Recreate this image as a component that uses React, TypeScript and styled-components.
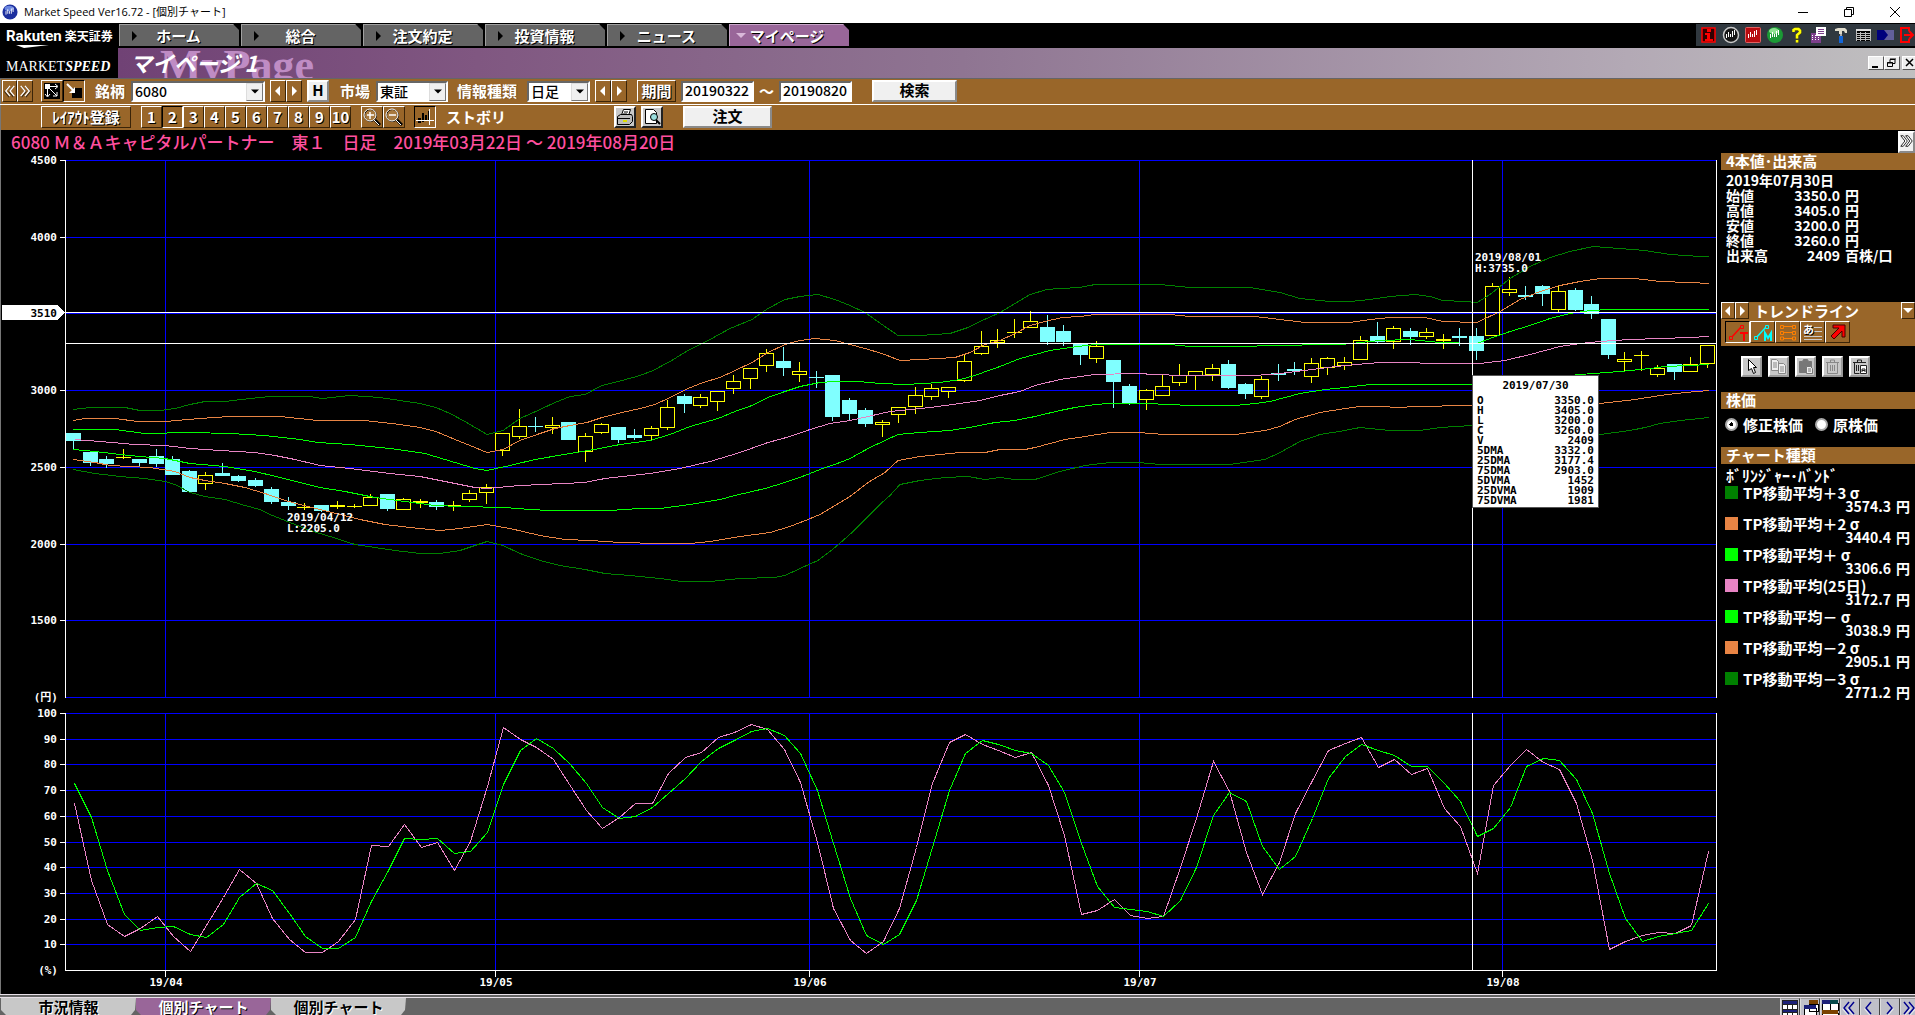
import React from "react";
import styled, { createGlobalStyle, css } from "styled-components";

const jp = '"Noto Sans CJK JP", sans-serif';
const mono = '"DejaVu Sans Mono", "Noto Sans CJK JP", monospace';
const brown = "#996629";
const blue = "#0000ff";
const lime = "#00ff00";
const dark = "#008000";
const orange = "#e88444";
const pink = "#e884c4";

const Global = createGlobalStyle`
  * { box-sizing: border-box; }
  html, body { margin: 0; background: #000; overflow: hidden; }
  body { font-family: ${jp}; color: #fff; }
  button, input, select { font-family: inherit; margin: 0; padding: 0; border-radius: 0; }
`;

const Page = styled.div`
  display: flex;
  flex-direction: column;
  height: 100vh;
  overflow: hidden;
  white-space: nowrap;
`;

/* ---------- window title ---------- */
const TitleBar = styled.header`
  display: flex;
  flex: none;
  align-items: center;
  height: 23px;
  padding-left: 2px;
  gap: 6px;
  background: #fff;
  color: #000;
  font: 11px/22px "Open Sans", ${jp};
`;
const TitleText = styled.span`
  flex: 1;
`;
const WindowButtons = styled.div`
  display: flex;
  margin-right: -3px;
`;
const WindowButton = styled.button`
  width: 46px;
  height: 22px;
  border: 0;
  background: none;
  display: flex;
  align-items: center;
  justify-content: center;
`;

/* ---------- brand and navigation ---------- */
const Head = styled.div`
  display: flex;
  flex: none;
  height: 56px;
  background: #000;
  border-bottom: 1px solid #666;
`;
const Brand = styled.div`
  width: 118px;
  flex: none;
  padding: 1px 0 0 6px;
`;
const Rakuten = styled.div`
  display: flex;
  align-items: center;
  gap: 3px;
  height: 24px;
  font: bold 12px/24px ${jp};
  b {
    font: bold 15px/24px Roboto, sans-serif;
    border: 0;
  }
`;
const Swoosh = styled.svg`
  display: block;
  margin: -3px 0 0 10px;
`;
const MarketSpeed = styled.div`
  font: 14px/20px "Liberation Serif", serif;
  margin-top: 8px;
`;
const HeadMain = styled.div`
  flex: 1;
  min-width: 0;
  display: flex;
  flex-direction: column;
`;
const NavRow = styled.nav`
  display: flex;
  height: 25px;
  padding: 1px 0 2px 1px;
  gap: 2px;
`;
const NavTab = styled.button<{ $on?: boolean }>`
  display: grid;
  grid-template-columns: 12px 1fr 23px;
  align-items: center;
  width: 120px;
  height: 22px;
  border: 0;
  border-top: 1px solid ${(p) => (p.$on ? "#c9a6c9" : "#a0a0a0")};
  border-left: 1px solid ${(p) => (p.$on ? "#c9a6c9" : "#a0a0a0")};
  padding-left: ${(p) => (p.$on ? "6px" : "9px")};
  background: ${(p) => (p.$on ? "#996699" : "#646464")};
  color: #fff;
  font: bold 15px/20px ${jp};
  text-shadow: 1px 1px 0 #000;
  clip-path: polygon(0 0, 114px 0, 100% 6px, 100% 100%, 0 100%);
`;
const IconStrip = styled.div`
  display: flex;
  align-items: center;
  gap: 4px;
  margin-left: auto;
  width: 219px;
  height: 22px;
  padding-left: 4px;
  background: #30383f;
`;
const StripButton = styled.button`
  flex: none;
  width: 18px;
  height: 18px;
  border: 0;
  background: none;
  svg { display: block; }
`;
const Banner = styled.div`
  position: relative;
  display: flex;
  align-items: center;
  height: 30px;
  overflow: hidden;
  background: linear-gradient(90deg, #704275 0, #805781 20%, #8f7592 47%, #b3a9b5 84%, #c0c0c0 100%);
`;
const Ghost = styled.span`
  position: absolute;
  left: 42px;
  top: -4px;
  font: bold 44px/44px "Liberation Serif", serif;
  color: #bf8cc4;
`;
const PageName = styled.h1`
  position: relative;
  margin: 0 auto 0 12px;
  padding-bottom: 3px;
  font: italic bold 22px/26px ${jp};
`;
const MdiButtons = styled.div`
  display: flex;
  margin-right: -3px;
`;
const MdiButton = styled.button<{ $gap?: boolean }>`
  display: flex;
  align-items: center;
  justify-content: center;
  width: 16px;
  height: 14px;
  margin-left: ${(p) => (p.$gap ? "2px" : "0")};
  border: 1px solid;
  border-color: #fff #555 #555 #fff;
  background: #eee;
`;

/* ---------- tool bars ---------- */
const Bar = styled.div`
  display: flex;
  flex: none;
  align-items: center;
  height: 25px;
  background: ${brown};
  border-left: 1px solid #777;
  padding-bottom: 1px;
  font: bold 15px/20px ${jp};
`;
const Rule = styled.div`
  flex: none;
  height: 1px;
  background: #fff;
`;
const Gap = styled.span<{ $w: number }>`
  flex: none;
  width: ${(p) => p.$w}px;
`;
const Caption = styled.label`
  flex: none;
  text-shadow: 1px 0 0 rgba(0, 0, 0, 0.3);
`;
const ToolButton = styled.button<{ $w: number; $down?: boolean }>`
  flex: none;
  display: flex;
  align-items: center;
  justify-content: center;
  width: ${(p) => p.$w}px;
  height: 22px;
  border: 1px solid;
  border-color: ${(p) => (p.$down ? "#000 #fff #fff #000" : "#fff #3a2408 #3a2408 #fff")};
  background: ${brown};
  color: #fff;
  font: bold 15px/18px ${jp};
  text-shadow: 1px 1px 0 #000;
`;
const PlainButton = styled.button<{ $w: number }>`
  flex: none;
  display: flex;
  align-items: center;
  justify-content: center;
  width: ${(p) => p.$w}px;
  height: 22px;
  border: 2px solid;
  border-color: #fff #8a8a8a #8a8a8a #fff;
  padding-bottom: 2px;
  background: #f0f0f0;
  color: #000;
  font: bold 15px/16px ${jp};
`;
const field = css`
  border: 2px solid;
  border-color: #666 #fff #fff #666;
  background: #fff;
  color: #000;
  font: 500 14px/16px ${jp};
`;
const Field = styled.input`
  ${field}
  flex: none;
  width: 73px;
  height: 21px;
  padding: 0 0 2px 2px;
`;
const Combo = styled.span<{ $w: number }>`
  ${field}
  flex: none;
  display: grid;
  width: ${(p) => p.$w}px;
  height: 21px;
  select {
    grid-area: 1 / 1;
    appearance: none;
    border: 0;
    padding: 0 0 2px 2px;
    background: #fff;
    color: #000;
    font: inherit;
  }
`;
const ComboArrow = styled.span`
  grid-area: 1 / 1;
  justify-self: end;
  display: flex;
  align-items: center;
  justify-content: center;
  width: 17px;
  pointer-events: none;
  border: 1px solid;
  border-color: #ddd #777 #777 #ddd;
  background: #f0f0f0;
`;

/* ---------- body ---------- */
const Main = styled.main`
  display: flex;
  flex: 1;
  min-height: 0;
`;
const ChartColumn = styled.section`
  flex: 1;
  min-width: 0;
  display: flex;
  flex-direction: column;
  border-left: 1px solid #777;
`;
const ChartTitle = styled.h2`
  flex: none;
  height: 25px;
  margin: 0;
  padding-left: 10px;
  color: #ff4f9f;
  font: 500 17px/23px ${jp};
`;
const ChartArea = styled.div`
  position: relative;
  flex: 1;
  min-height: 0;
`;
const ChartSvg = styled.svg`
  display: block;
  width: 100%;
  height: 100%;
  font: bold 11px ${mono};
`;
const Tooltip = styled.table`
  position: absolute;
  left: 1471px;
  top: 220px;
  width: 127px;
  border: 1px solid #555;
  border-spacing: 0;
  background: #fff;
  color: #000;
  font: bold 11px/10px ${mono};
  padding: 0 4px 1px;
  caption, th, td { padding: 0; line-height: 10px; }
  th { text-align: left; }
  td { text-align: right; }
  thead th { text-align: center; height: 20px; }
`;

/* ---------- side panel ---------- */
const Side = styled.aside`
  flex: none;
  width: 194px;
  font: bold 15px/15px ${jp};
`;
const SideTop = styled.div`
  display: flex;
  justify-content: flex-end;
  height: 23px;
  padding-top: 1px;
`;
const SideHead = styled.h3`
  margin: 0;
  height: 17px;
  padding-left: 5px;
  background: ${brown};
  font: bold 15px/15px ${jp};
`;
const Quote = styled.table`
  margin: 3px 0 39px 5px;
  border-spacing: 0;
  font: bold 14px/15px ${jp};
  caption, th, td { padding: 0; text-align: left; height: 15px; line-height: 15px; }
  th { width: 55px; font-weight: bold; }
  td:nth-child(2) { width: 59px; text-align: right; }
  td:nth-child(3) { padding-left: 5px; }
`;
const TrendBar = styled.div`
  height: 44px;
  background: ${brown};
`;
const TrendHead = styled.div`
  display: flex;
  height: 17px;
  font: bold 15px/17px ${jp};
  span { flex: 1; padding-left: 5px; }
`;
const SmallButton = styled.button`
  display: flex;
  align-items: center;
  justify-content: center;
  width: 14px;
  height: 17px;
  border: 1px solid;
  border-color: #fff #3a2408 #3a2408 #fff;
  background: ${brown};
`;
const TrendTools = styled.div`
  display: flex;
  padding: 2px 4px;
`;
const EditTools = styled.div`
  display: flex;
  gap: 6px;
  padding: 10px 0 15px 20px;
`;
const IconButton = styled.button<{ $s: number; $black?: boolean }>`
  flex: none;
  display: flex;
  align-items: center;
  justify-content: center;
  width: ${(p) => p.$s}px;
  height: ${(p) => p.$s}px;
  border: 2px solid;
  border-color: ${(p) => (p.$black ? "#fff #222 #222 #fff" : "#fff #999 #999 #fff")};
  background: #c8c8c8;
`;
const Radios = styled.div`
  display: flex;
  align-items: center;
  height: 30px;
  margin-bottom: 8px;
  padding-left: 4px;
  gap: 12px;
  label { display: flex; align-items: center; gap: 5px; }
  input {
    appearance: none;
    width: 13px;
    height: 13px;
    border-radius: 50%;
    border: 2px solid #aaa;
    background: #fff;
  }
  input:checked { background: radial-gradient(#000 0 2px, #fff 2px); }
`;
const LegendTitle = styled.p`
  margin: 3px 0 2px;
  padding-left: 5px;
  font: bold 16px/16px ${jp};
`;
const Legend = styled.ul`
  list-style: none;
  margin: 0;
  padding: 0 5px 0 4px;
`;
const LegendItem = styled.li<{ $c: string }>`
  height: 31px;
  font: bold 15px/15px ${jp};
  div { display: flex; align-items: center; gap: 5px; }
  div::before {
    content: "";
    width: 13px;
    height: 13px;
    background: ${(p) => p.$c};
  }
  p { margin: 0; line-height: 12px; text-align: right; font-size: 14px; }
  span { margin-left: 5px; }
`;

/* ---------- footer ---------- */
const Footer = styled.footer`
  flex: none;
  display: flex;
  height: 21px;
  padding-left: 1px;
  background: #646464;
  border-top: 4px double #e8e0e8;
`;
const FootTab = styled.button<{ $on?: boolean }>`
  width: 135px;
  height: 17px;
  border: 0;
  background: ${(p) => (p.$on ? "#996699" : "#c8c8c8")};
  color: ${(p) => (p.$on ? "#fff" : "#000")};
  text-shadow: 1px 1px 0 ${(p) => (p.$on ? "#000" : "#fff")};
  font: bold 15px/17px ${jp};
  clip-path: polygon(0 0, 100% 0, 134px 12px, 130px 100%, 5px 100%, 0 12px);
`;
const FootIcons = styled.div`
  display: flex;
  margin: 0 -5px 0 auto;
`;
const FootButton = styled.button`
  flex: none;
  width: 20px;
  height: 20px;
  border: 1px solid;
  border-color: #999 #444 #444 #ddd;
  background: #c0c0c8;
  svg { display: block; }
`;

/* ---------- chart data ---------- */
// [rising, high, body top, body bottom, low] on the drawing's vertical scale
const candles: number[][] = [
  [0,433,433,441,450],[0,452,452,463,466],[0,456,459,464,468],[1,449,457,458,459],[0,459,459,463,467],
  [0,449,456,464,467],[0,456,459,475,475],[0,470,471,492,493],[1,472,475,484,490],[0,463,473,476,476],
  [0,475,476,481,482],[0,478,480,486,487],[0,487,489,502,504],[0,497,502,506,510],[1,503,507,508,510],
  [0,505,505,511,512],[1,501,505,507,509],[1,504,506,507,508],[1,494,497,506,506],[0,494,494,509,511],
  [1,498,499,510,510],[1,499,501,503,508],[0,500,502,507,510],[1,501,505,506,511],[1,490,493,500,502],
  [1,484,487,493,504],[1,433,433,451,456],[1,409,426,437,439],[0,417,426,427,432],[1,417,425,428,434],
  [0,422,422,440,440],[1,433,436,452,462],[1,423,424,433,434],[0,427,427,440,443],[0,429,435,438,440],
  [1,426,428,436,440],[1,400,407,428,430],[0,394,396,404,413],[1,394,397,406,408],[1,391,391,402,411],
  [1,375,381,389,394],[1,368,368,379,389],[1,349,353,366,372],[0,347,361,368,376],[1,362,371,375,382],
  [0,371,377,378,388],[0,375,375,417,421],[0,398,400,414,421],[0,408,410,424,427],[1,420,422,425,437],
  [1,407,407,415,423],[1,387,395,407,414],[1,384,388,397,400],[1,387,387,392,398],[1,355,361,381,382],
  [1,331,346,354,355],[1,329,340,343,348],[1,319,332,333,338],[1,311,321,328,328],[0,315,327,342,345],
  [0,325,331,342,346],[0,343,343,355,365],[1,341,346,359,363],[0,360,360,382,408],[0,384,386,403,405],
  [1,389,390,400,410],[1,375,386,396,396],[1,364,375,383,386],[1,371,371,376,390],[1,364,368,375,381],
  [0,360,364,388,389],[0,383,384,394,399],[1,376,379,397,399],[0,364,373,375,381],[0,362,369,371,375],
  [1,358,363,377,383],[1,357,358,368,375],[1,357,362,366,370],[1,336,340,360,360],[0,322,336,342,344],
  [1,326,328,342,349],[0,328,331,337,345],[1,328,332,337,339],[1,334,339,341,349],[0,328,336,338,346],
  [0,328,336,351,360],[1,283,286,336,336],[1,277,289,293,296],[0,286,295,297,300],[0,285,286,294,306],
  [1,286,291,310,312],[0,288,290,310,311],[0,296,304,314,319],[0,319,319,355,359],[1,352,359,362,372],
  [1,351,355,356,371],[1,365,368,375,377],[0,364,364,372,380],[1,357,364,372,372],[1,345,345,364,368],
];
const bands: [string, string][] = [
  [dark, "73,409 90,407 125,407 140,410 160,410 175,408 190,404 205,401 225,401 250,398 270,396 310,396 322,398 350,395 380,397 400,400 420,403 436,407 450,413 465,421 487,434 503,430 520,418 540,409 555,402 570,396 585,394 602,385 622,380 640,375 653,370 670,361 688,350 710,339 730,328 752,319 768,308 785,299 800,296 818,294 835,299 850,305 865,312 882,324 898,335 920,335 950,333 968,327 980,321 1000,312 1015,303 1030,294 1047,289 1060,288 1080,287 1095,284 1160,284 1190,287 1250,287 1280,292 1300,298 1330,301 1350,301 1370,299 1390,296 1415,294 1430,296 1443,300 1465,301 1477,302 1490,294 1510,278 1530,266 1550,257 1570,251 1593,246 1620,248 1645,250 1670,254 1700,256 1709,256"],
  [orange, "73,420 85,418 115,418 138,421 165,421 200,418 230,416 280,416 318,420 365,420 400,424 420,427 436,431 455,439 470,445 487,452 503,449 520,440 540,433 555,428 570,425 587,422 602,417 622,412 640,408 655,404 668,398 688,388 703,382 720,377 735,370 752,362 768,352 785,344 800,340 815,338 835,340 850,344 865,348 882,353 900,360 920,359 955,357 970,352 985,344 1000,340 1015,333 1030,325 1045,321 1062,317 1080,316 1095,314 1170,314 1190,316 1255,316 1280,319 1305,322 1350,322 1370,319 1390,317 1425,317 1443,321 1477,322 1500,311 1520,299 1540,291 1560,285 1580,281 1600,278 1635,278 1660,281 1690,282 1709,283"],
  [lime, "73,429 115,429 145,433 190,432 230,433 265,435 300,439 318,442 350,444 390,448 425,453 455,462 475,468 487,470 510,465 535,459 570,453 600,448 620,444 650,440 670,434 690,426 718,418 735,411 752,405 768,397 785,391 800,386 820,382 835,381 858,381 880,383 905,384 940,382 960,379 975,375 983,372 1000,366 1020,358 1035,354 1050,350 1070,347 1095,344 1170,344 1190,346 1250,346 1265,345 1340,344 1352,343 1360,342 1380,340 1410,339 1430,341 1440,342 1477,343 1490,338 1510,331 1530,325 1550,318 1570,313 1590,310 1610,309 1709,309"],
  [pink, "75,439 100,441 135,444 165,445 190,448 220,450 255,452 275,455 295,459 320,465 350,468 390,473 420,476 450,482 475,487 487,488 520,485 585,482 605,478 650,473 680,468 710,461 740,452 768,442 790,436 810,429 830,423 850,420 868,416 890,411 910,409 930,407 960,403 980,400 1000,395 1020,391 1035,385 1060,379 1095,374 1135,373 1180,375 1255,375 1280,373 1320,368 1345,365 1380,362 1400,362 1440,363 1480,363 1505,360 1530,354 1560,346 1580,343 1600,341 1630,339 1660,338 1690,337 1709,336"],
  [lime, "73,449 95,451 120,454 140,456 165,458 190,463 225,466 255,471 280,477 300,482 320,487 345,491 375,497 405,501 435,505 460,506 505,507 530,509 550,510 610,510 640,508 660,508 690,504 720,499 735,495 765,488 785,482 805,475 820,469 840,462 850,458 870,447 885,440 898,434 920,432 950,430 975,426 995,422 1015,420 1035,416 1060,410 1075,407 1095,404 1110,403 1150,403 1165,404 1195,405 1235,405 1255,403 1270,401 1285,397 1300,393 1325,389 1345,387 1370,384 1472,384 1500,383 1580,374 1620,371 1650,368 1665,366 1690,365 1709,364"],
  [orange, "73,459 95,462 110,465 150,467 175,471 190,477 205,480 225,483 245,487 265,493 285,500 300,504 320,509 340,514 360,519 385,524 410,527 440,530 460,528 487,524 510,528 540,535 565,539 590,540 620,542 660,543 690,543 710,541 740,536 770,532 790,526 808,519 820,514 835,505 850,496 868,482 885,472 898,460 920,456 940,454 960,452 985,452 1000,449 1025,449 1035,447 1050,443 1065,439 1085,436 1110,432 1138,432 1165,434 1235,434 1250,432 1265,430 1280,426 1295,419 1320,412 1345,408 1360,406 1385,406 1395,407 1420,406 1465,405 1600,403 1635,399 1660,395 1685,392 1709,390"],
  [dark, "73,469 95,473 120,476 145,478 165,481 175,484 190,492 205,496 225,499 245,505 260,509 270,514 290,522 310,530 330,536 355,544 375,547 395,550 420,553 440,553 460,550 475,545 487,541 503,545 520,553 540,560 560,565 585,569 605,573 630,575 660,578 682,581 710,581 740,578 775,577 785,575 800,568 818,560 835,547 852,532 868,516 882,502 890,495 900,484 920,480 945,477 968,476 985,479 1000,477 1015,479 1035,479 1060,471 1085,465 1110,462 1138,462 1160,464 1230,464 1250,461 1265,459 1280,452 1300,441 1320,434 1345,430 1360,427 1390,430 1420,430 1440,427 1472,425 1600,434 1615,432 1630,430 1645,427 1660,423 1680,420 1700,418 1709,417"],
];
const fast = [803,880,924,936,928,916,936,951,925,897,869,883,918,939,952,952,941,919,845,846,824,847,842,870,841,786,727,739,747,759,784,810,828,817,803,803,773,757,752,737,732,724,729,749,782,842,908,940,953,941,908,847,783,742,734,744,750,757,752,785,835,914,910,899,915,918,916,867,818,761,791,852,894,862,813,780,750,743,737,767,759,774,768,808,826,873,785,765,749,762,769,803,860,949,941,935,932,933,925,851];
const slow = [783,817,870,914,930,927,926,934,937,924,897,883,890,913,936,948,948,937,901,870,838,839,838,853,851,832,784,750,738,748,763,783,807,818,816,807,793,778,761,748,740,731,728,735,753,790,843,898,935,944,934,900,847,790,753,740,744,750,753,765,792,843,886,907,909,911,916,900,867,815,792,801,846,869,856,818,778,756,744,750,755,766,766,783,801,836,828,807,766,758,760,779,813,873,918,941,936,933,930,903];

const dayX = (i: number) => 73 + Math.ceil(16.5 * i);
const priceLines: [number, string][] = [[160,"4500"],[237,"4000"],[313,""],[390,"3000"],[467,"2500"],[544,"2000"],[620,"1500"],[697,""]];
const oscLines: [number, string][] = [[713,"100"],[739,"90"],[764,"80"],[790,"70"],[816,"60"],[842,"50"],[867,"40"],[893,"30"],[919,"20"],[944,"10"]];
const months: [number, string][] = [[165,"19/04"],[495,"19/05"],[809,"19/06"],[1139,"19/07"],[1502,"19/08"]];

const series = (ys: number[]) => ys.map((y, i) => `${dayX(i) + 1.5},${y + 0.5}`).join(" ");

function Chart() {
  return (
    <ChartSvg viewBox="1 155 1720 839" preserveAspectRatio="xMinYMin meet" role="img" aria-label="日足チャート">
      <g shapeRendering="crispEdges">
        <g fill={blue}>
          {priceLines.map(([y]) => <rect key={y} x={66} y={y} width={1650} height={1} />)}
          {oscLines.map(([y]) => <rect key={y} x={66} y={y} width={1650} height={1} />)}
          {months.map(([x]) => (
            <g key={x}>
              <rect x={x} y={160} width={1} height={538} />
              <rect x={x} y={713} width={1} height={257} />
            </g>
          ))}
        </g>
        <g fill="#fff">
          <rect x={65} y={160} width={1} height={538} />
          <rect x={65} y={713} width={1} height={258} />
          <rect x={1716} y={160} width={1} height={538} />
          <rect x={1716} y={713} width={1} height={258} />
          <rect x={65} y={970} width={1652} height={1} />
          {[...priceLines, ...oscLines].filter((l) => l[1]).map(([y]) => <rect key={y} x={60} y={y} width={6} height={1} />)}
          {months.map(([x]) => <rect key={x} x={x} y={970} width={1} height={7} />)}
        </g>
        {candles.map(([up, h, t, b, l], i) => {
          const x = dayX(i);
          const left = Math.max(66, x - 7);
          const w = x + 8 - left;
          const c = up ? "#ffff00" : "#80ffff";
          return (
            <g key={i} fill={c}>
              {t > h && <rect x={x} y={h} width={1} height={t - h} />}
              {l > b && <rect x={x} y={b} width={1} height={l - b} />}
              {up && b - t > 2 ? (
                <rect x={left + 0.5} y={t + 0.5} width={w - 1} height={b - t - 1} fill="none" stroke={c} />
              ) : (
                <rect x={left} y={t} width={w} height={b - t} />
              )}
            </g>
          );
        })}
        <g fill="none" strokeWidth={1} transform="translate(0 .5)">
          {bands.map(([c, pts], i) => <polyline key={i} points={pts} stroke={c} />)}
        </g>
        <g fill="none" strokeWidth={1}>
          <polyline points={series(fast)} stroke={pink} />
          <polyline points={series(slow)} stroke={lime} />
        </g>
        <g fill="#fff">
          <rect x={66} y={312} width={1650} height={1} />
          <rect x={66} y={343} width={1650} height={1} />
          <rect x={1472} y={160} width={1} height={538} />
          <rect x={1472} y={713} width={1} height={257} />
          <polygon points="2,305 58,305 65,312.500 58,320 2,320" />
        </g>
      </g>
      <g fill="#fff">
        <g textAnchor="end">
          {[...priceLines, ...oscLines].filter((l) => l[1]).map(([y, t]) => <text key={y} x={57} y={y + 4}>{t}</text>)}
          <text x={57} y={317} fill="#000">3510</text>
          <text x={58} y={701}>(円)</text>
          <text x={58} y={974}>(%)</text>
        </g>
        <g textAnchor="middle">
          {months.map(([x, t]) => <text key={x} x={x + 1} y={986}>{t}</text>)}
        </g>
        <text x={287} y={521}>2019/04/12</text>
        <text x={287} y={532}>L:2205.0</text>
        <text x={1475} y={261}>2019/08/01</text>
        <text x={1475} y={272}>H:3735.0</text>
      </g>
    </ChartSvg>
  );
}

const tipRows = [["O","3350.0"],["H","3405.0"],["L","3200.0"],["C","3260.0"],["V","2409"],["5DMA","3332.0"],["25DMA","3177.4"],["75DMA","2903.0"],["5DVMA","1452"],["25DVMA","1909"],["75DVMA","1981"]];
const quoteRows = [["始値","3350.0","円"],["高値","3405.0","円"],["安値","3200.0","円"],["終値","3260.0","円"],["出来高","2409","百株/口"]];
const legend: [string, string, string][] = [
  [dark,"TP移動平均＋3 σ","3574.3"],[orange,"TP移動平均＋2 σ","3440.4"],[lime,"TP移動平均＋ σ","3306.6"],[pink,"TP移動平均(25日)","3172.7"],
  [lime,"TP移動平均－ σ","3038.9"],[orange,"TP移動平均－2 σ","2905.1"],[dark,"TP移動平均－3 σ","2771.2"],
];

/* ---------- icons ---------- */
const Tri = ({ dir, fill = "#fff", s = 10 }: { dir: "l" | "r" | "d"; fill?: string; s?: number }) => (
  <svg width={s} height={s} viewBox="0 0 10 10" aria-hidden="true">
    <path fill={fill} d={dir === "l" ? "M7 0v10L2 5z" : dir === "r" ? "M3 0v10l5-5z" : "M0 2h10L5 7z"} />
  </svg>
);
const Chevrons = ({ dir, stroke = "#fff", shadow = "#000", one, w = 14 }: { dir: "l" | "r"; stroke?: string; shadow?: string; one?: boolean; w?: number }) => (
  <svg width={w} height="14" viewBox="0 0 14 14" fill="none" strokeWidth="1.500" aria-hidden="true">
    <g transform={dir === "l" ? "matrix(-1 0 0 1 14 0)" : undefined}>
      <path stroke={shadow} d={one ? "M6 2l5 6-5 6" : "M3 2l5 6-5 6M8 2l5 6-5 6"} opacity=".6" />
      <path stroke={stroke} d={one ? "M5 1l5 6-5 6" : "M2 1l5 6-5 6M7 1l5 6-5 6"} />
    </g>
  </svg>
);
const HollowChevrons = () => (
  <svg width="16" height="16" viewBox="0 0 16 16" fill="#fff" stroke="#000" aria-hidden="true">
    <path d="M1 1.500h3l5 6.500-5 6.500H1L6 8zM7 1.500h3L15 8l-5 6.500H7L12 8z" />
  </svg>
);
const Bars = ({ c = "#fff" }: { c?: string }) => (
  <path stroke={c} strokeWidth="1" fill="none" d="M4.500 8v4M6.500 6v5M8.500 8v3M10.500 5v6M12.500 4v5" />
);
const S = ({ children, w = 18 }: { children: React.ReactNode; w?: number }) => (
  <svg width={w} height={w} viewBox="0 0 18 18" fill="none" aria-hidden="true">{children}</svg>
);
const stripIcons: [string, React.ReactNode][] = [
  ["情報", <S><path fill="#300" stroke="#f00" strokeWidth="1.500" d="M2 2h13v14H2z" /><path fill="#f00" d="M7 3h4v3H7zM5 7h5v6h3v2H5v-2h2V9H5z" /></S>],
  ["チャート", <S><circle cx="9" cy="9" r="7.500" fill="#161616" stroke="#c8c8c8" strokeWidth="1.500" /><Bars /></S>],
  ["赤チャート", <S><rect x="1.500" y="1.500" width="15" height="15" rx="1" fill="#b80c10" stroke="#e06060" /><Bars /></S>],
  ["緑チャート", <S><circle cx="9" cy="9" r="8" fill="#1b9a35" /><ellipse cx="8" cy="5" rx="5" ry="3" fill="#8be090" /><Bars /></S>],
  ["ヘルプ", <S><path stroke="#554c00" strokeWidth="3" d="M6 6V4l2-1h3l1 2v2l-3 3v3M8 15h3" /><path stroke="#ff0" strokeWidth="2.500" d="M5.500 6V4L7 3h3.500l1.500 1.500v2L9 9v3.500M9 14v2.500" /></S>],
  ["ウィンドウ", <S><path fill="#7d3f8c" d="M1 7h10v10H1z" /><path fill="#fff" d="M6 1h10v9H6z" /><path stroke="#7d3f8c" d="M8 3.500h6M8 5.500h6M8 7.500h6" /><path stroke="#fff" strokeDasharray="1 2" d="M2 9.500h4M2 11.500h8M2 13.500h8" /></S>],
  ["設定", <S><path fill="#e0dccc" d="M3 3l3-1h7l2 2v3h-2l-1-2h-2v3H7V5H3z" /><path fill="#aaa" d="M8 8h2v3H8z" /><path fill="#1265d8" d="M7 10h4v7H7z" /></S>],
  ["一覧", <S><path fill="#000" d="M2 3h15v12H2z" /><path fill="#ddd" d="M2 3h15v2H2z" /><path stroke="#bbb" d="M2.500 5v10M2 7.500h14M2 9.500h14M2 11.500h14M2 13.500h14M6.500 6v9M11.500 6v9M16.500 5v10" /></S>],
  ["再生", <S><path fill="#625f9b" d="M1 4h17v10H1z" /><path fill="#00007c" d="M1 4h7l4 5-4 5H1z" /></S>],
  ["終了", <S><path stroke="#f00" strokeWidth="2" d="M11 5V2H3v14h8v-3M6 9h9M11 5l4 4-4 4" /></S>],
];
const TrendIcon = ({ c, children }: { c: string; children?: React.ReactNode }) => (
  <svg width="20" height="19" viewBox="0 0 20 19" fill="none" aria-hidden="true">
    <path stroke={c} strokeWidth="1.500" d="M3 15L13 4" />
    <path fill={brown} stroke={c} d="M1.500 13.500h3v3h-3zM12.500 2.500h3v3h-3z" />
    {children}
  </svg>
);
const Candlestick = (
  <svg width="18" height="16" viewBox="0 0 18 16" shapeRendering="crispEdges" aria-hidden="true">
    <path fill="#000" d="M2 9h3v5H2zM6 4h2v9H6zM9 6h2v6H9zM12 2h2v9h-2z" />
    <path fill="#fff" d="M0 11h18v1H0zM13 0h1v16h-1z" />
  </svg>
);
const Magnifier = ({ plus }: { plus?: boolean }) => (
  <svg width="18" height="18" viewBox="0 0 18 18" fill="none" aria-hidden="true">
    <circle cx="7.500" cy="7.500" r="6" fill="#a87a40" stroke="#000" />
    <circle cx="7" cy="7" r="6" stroke="#fff" />
    <path stroke="#fff" strokeWidth="1.500" d={plus ? "M4 7h7M7 4v7" : "M4 7h7"} />
    <path stroke="#000" strokeWidth="3" d="M12 12l5 5" /><path stroke="#fff" d="M11 12l5 5" />
  </svg>
);
const WinIcon = ({ kind }: { kind: number }) => (
  <svg width="18" height="18" viewBox="0 0 18 18" shapeRendering="crispEdges" aria-hidden="true">
    {kind === 0 && <><path fill="#222" d="M1 1h16v17H1z" /><path fill="#fff" d="M2 6h4v4H2zM7 6h4v4H7zM12 6h4v4h-4zM2 14h4v4H2zM7 14h4v4H7zM12 14h4v4h-4z" /><path fill="#1c2078" d="M2 2h14v3H2zM2 11h14v2H2z" /></>}
    {kind === 1 && <><path fill="#7a4200" d="M8 1h9v4H8z" /><path fill="#fff" stroke="#000" d="M8 5h9v7H8zM3 9h12v10H3z" /><path fill="#1c2078" d="M3 6h12v4H3z" /></>}
    {kind === 2 && <><path fill="#fff" stroke="#000" d="M1 4h8v7H1zM9 4h8v7H9zM1 14h16v5H1z" /><path fill="#1c2078" d="M1 1h8v4H1z" /><path fill="#064a4a" d="M9 1h8v4H9z" /><path fill="#7a4200" d="M1 11h16v4H1z" /></>}
  </svg>
);

function Picker({ id, width, options }: { id: string; width: number; options: string[] }) {
  return (
    <Combo $w={width}>
      <select id={id}>{options.map((o) => <option key={o}>{o}</option>)}</select>
      <ComboArrow><Tri dir="d" fill="#000" s={8} /></ComboArrow>
    </Combo>
  );
}

export default function App() {
  return (
    <Page>
      <Global />
      <TitleBar>
        <svg width="16" height="16" viewBox="0 0 18 18" fill="none" aria-hidden="true">
          <circle cx="9" cy="9" r="8.500" fill="#1c2f9e" /><ellipse cx="8" cy="5" rx="5" ry="3" fill="#6a86e0" /><Bars />
        </svg>
        <TitleText>Market Speed Ver16.72 - [個別チャート]</TitleText>
        <WindowButtons>
          <WindowButton aria-label="最小化"><svg width="10" height="10" stroke="#000"><path d="M0 5.500h10" /></svg></WindowButton>
          <WindowButton aria-label="元に戻す"><svg width="10" height="10" fill="none" stroke="#000"><path d="M.5 2.500h7v7h-7zM2.500 2V.5h7v7H8" /></svg></WindowButton>
          <WindowButton aria-label="閉じる"><svg width="10" height="10" stroke="#000"><path d="M0 0l10 10M10 0L0 10" /></svg></WindowButton>
        </WindowButtons>
      </TitleBar>

      <Head>
        <Brand>
          <Rakuten><b>Rakuten</b>楽天証券</Rakuten>
          <Swoosh width="34" height="4" viewBox="0 0 34 4" aria-hidden="true"><path fill="#fff" d="M0 0h33L8 3z" /></Swoosh>
          <MarketSpeed>MARKET<b><i>SPEED</i></b></MarketSpeed>
        </Brand>
        <HeadMain>
          <NavRow>
            {["ホーム", "総合", "注文約定", "投資情報", "ニュース", "マイページ"].map((t, i) => (
              <NavTab key={t} $on={i === 5}>
                <Tri dir={i === 5 ? "d" : "r"} fill={i === 5 ? "#d9b8d9" : "#000"} />{t}
              </NavTab>
            ))}
            <IconStrip>
              {stripIcons.map(([n, icon]) => <StripButton key={n} aria-label={n}>{icon}</StripButton>)}
            </IconStrip>
          </NavRow>
          <Banner>
            <Ghost aria-hidden="true">MyPage</Ghost>
            <PageName>マイページ 1</PageName>
            <MdiButtons>
              <MdiButton aria-label="最小化"><svg width="10" height="10"><path fill="#000" d="M1 8h6v2H1z" /></svg></MdiButton>
              <MdiButton aria-label="元に戻す"><svg width="10" height="10" fill="none" stroke="#000"><path d="M.5 4.500h5v4h-5zM0 5h6M3 4V1.500h5v4H6M3 1h6" /></svg></MdiButton>
              <MdiButton $gap aria-label="閉じる"><svg width="10" height="10" stroke="#000" strokeWidth="1.500"><path d="M1 1l7 7M8 1L1 8" /></svg></MdiButton>
            </MdiButtons>
          </Banner>
        </HeadMain>
      </Head>

      <Bar>
        <Gap $w={1} />
        <ToolButton $w={15} aria-label="前へ"><Chevrons dir="l" w={12} /></ToolButton>
        <ToolButton $w={16} aria-label="次へ"><Chevrons dir="r" w={12} /></ToolButton>
        <Gap $w={8} />
        <ToolButton $w={22} aria-label="レイアウト展開">
          <svg width="16" height="16" viewBox="0 0 16 16" fill="none" aria-hidden="true">
            <path fill="#000" d="M0 0h16v16H0z" /><path stroke="#fff" d="M1 3.500h12M11 1l3 2.500L11 6M3.500 2v11M1 11l2.500 3L6 11M4 4l9 9M13 9v4H9" /><path fill="#fff" d="M1 1h5v5H1z" />
          </svg>
        </ToolButton>
        <ToolButton $w={22} $down aria-label="縮小表示">
          <svg width="18" height="16" viewBox="0 0 18 16" fill="none" aria-hidden="true">
            <path fill="#000" d="M7 5h10v10H7z" /><path stroke="#fff" strokeWidth="2" d="M2 1l7 7" /><path fill="#fff" d="M10 4v6H4z" />
          </svg>
        </ToolButton>
        <Gap $w={10} />
        <Caption htmlFor="code">銘柄</Caption>
        <Gap $w={6} />
        <Picker id="code" width={134} options={["6080"]} />
        <Gap $w={5} />
        <ToolButton $w={16} aria-label="前の銘柄"><Tri dir="l" /></ToolButton>
        <ToolButton $w={16} aria-label="次の銘柄"><Tri dir="r" /></ToolButton>
        <Gap $w={5} />
        <PlainButton $w={22}>H</PlainButton>
        <Gap $w={11} />
        <Caption htmlFor="market">市場</Caption>
        <Gap $w={6} />
        <Picker id="market" width={72} options={["東証"]} />
        <Gap $w={9} />
        <Caption htmlFor="kind">情報種類</Caption>
        <Gap $w={10} />
        <Picker id="kind" width={63} options={["日足"]} />
        <Gap $w={5} />
        <ToolButton $w={16} aria-label="前の種類"><Tri dir="l" /></ToolButton>
        <ToolButton $w={16} aria-label="次の種類"><Tri dir="r" /></ToolButton>
        <Gap $w={10} />
        <ToolButton $w={39}>期間</ToolButton>
        <Gap $w={5} />
        <Field aria-label="開始日" defaultValue="20190322" />
        <Gap $w={5} />
        ～
        <Gap $w={5} />
        <Field aria-label="終了日" defaultValue="20190820" />
        <Gap $w={20} />
        <PlainButton $w={85}>検索</PlainButton>
      </Bar>
      <Rule />
      <Bar>
        <Gap $w={40} />
        <ToolButton $w={90}>ﾚｲｱｳﾄ登録</ToolButton>
        <Gap $w={10} />
        {[1, 2, 3, 4, 5, 6, 7, 8, 9, 10].map((n) => <ToolButton key={n} $w={21} $down={n === 2}>{n}</ToolButton>)}
        <Gap $w={10} />
        <ToolButton $w={22} aria-label="拡大"><Magnifier plus /></ToolButton>
        <ToolButton $w={22} aria-label="縮小"><Magnifier /></ToolButton>
        <Gap $w={9} />
        <ToolButton $w={22} $down aria-label="足表示">{Candlestick}</ToolButton>
        <Gap $w={10} />
        ストボリ
        <Gap $w={108} />
        <IconButton $s={22} $black aria-label="印刷">
          <svg width="18" height="18" viewBox="0 0 18 18" fill="#fff" stroke="#000" aria-hidden="true">
            <path d="M5.500 7l2-5.500h7l-2 6z" /><path fill="#bbb" d="M1.500 8.500l3-2h11l1 2v5l-3 3h-12z" /><path d="M2 10.500h12M8 4h4M7 6h4" /><path stroke="#dd0" strokeWidth="2" d="M7 13h4" />
          </svg>
        </IconButton>
        <Gap $w={5} />
        <IconButton $s={22} $black aria-label="印刷プレビュー">
          <svg width="18" height="18" viewBox="0 0 18 18" fill="#fff" stroke="#000" aria-hidden="true">
            <path d="M2.500 1.500h8l3 3v11h-11z" /><circle cx="11" cy="9" r="3.500" fill="#9adede" /><path strokeWidth="2" d="M13 12l4 4" />
          </svg>
        </IconButton>
        <Gap $w={20} />
        <PlainButton $w={89}>注文</PlainButton>
      </Bar>

      <Main>
        <ChartColumn>
          <ChartTitle>6080 Ｍ＆Ａキャピタルパートナー　東１　日足　2019年03月22日 ～ 2019年08月20日</ChartTitle>
          <ChartArea>
            <Chart />
            <Tooltip>
              <thead><tr><th colSpan={2}>2019/07/30</th></tr></thead>
              <tbody>{tipRows.map(([k, v]) => <tr key={k}><th scope="row">{k}</th><td>{v}</td></tr>)}</tbody>
            </Tooltip>
          </ChartArea>
        </ChartColumn>

        <Side>
          <SideTop><PlainButton $w={17} aria-label="パネルを閉じる"><HollowChevrons /></PlainButton></SideTop>
          <SideHead>4本値･出来高</SideHead>
          <Quote>
            <caption>2019年07月30日</caption>
            <tbody>
              {quoteRows.map(([k, v, u]) => <tr key={k}><th scope="row">{k}</th><td>{v}</td><td>{u}</td></tr>)}
            </tbody>
          </Quote>
          <TrendBar>
            <TrendHead>
              <SmallButton aria-label="前"><Tri dir="l" /></SmallButton>
              <SmallButton aria-label="次"><Tri dir="r" /></SmallButton>
              <span>トレンドライン</span>
              <SmallButton aria-label="一覧を開く"><Tri dir="d" /></SmallButton>
            </TrendHead>
            <TrendTools>
              <ToolButton $w={25} $down aria-label="トレンド線"><TrendIcon c="#f00"><path fill="#f00" d="M12 9h8v2h-3v7h-2v-7h-3z" /></TrendIcon></ToolButton>
              <ToolButton $w={25} aria-label="マルチ線"><TrendIcon c="#0ff"><path stroke="#0ff" strokeWidth="2" d="M12 18v-8l3 5 3-5v8" /></TrendIcon></ToolButton>
              <ToolButton $w={25} aria-label="水平線">
                <svg width="18" height="18" viewBox="0 0 18 18" fill={brown} stroke="#ff8000" aria-hidden="true"><path d="M3 3.500h12M3 9.500h12M3 15.500h12" /><path d="M1.500 2.500h3v3h-3zM13.500 2.500h3v3h-3zM1.500 8.500h3v3h-3zM13.500 8.500h3v3h-3zM1.500 14h3v3h-3zM13.500 14h3v3h-3z" /></svg>
              </ToolButton>
              <ToolButton $w={25} aria-label="文字">
                <svg width="19" height="18" viewBox="0 0 19 18" aria-hidden="true"><path stroke="#ccc" d="M11 4.500h8M11 8.500h8M1 13.500h18M1 16.500h18" /><text x="0" y="11" fill="#fff" fontSize="11">あ</text></svg>
              </ToolButton>
              <ToolButton $w={25} aria-label="矢印">
                <svg width="18" height="18" viewBox="0 0 18 18" aria-hidden="true"><path fill="#f00" stroke="#400" d="M4 2h12v12h-3V8l-8 8-3-3 8-8H4z" /></svg>
              </ToolButton>
            </TrendTools>
          </TrendBar>
          <EditTools>
            <IconButton $s={21} aria-label="選択"><svg width="16" height="17" viewBox="0 0 16 17" fill="#fff" stroke="#000"><path d="M4.500 1.500v11l3-2 2 5 2-1-2-5h3z" /></svg></IconButton>
            <IconButton $s={21} aria-label="コピー"><svg width="17" height="17" viewBox="0 0 17 17" fill="#eee" stroke="#888"><path d="M1.500 1.500h5l2 2v9h-7zM8.500 5.500h5l2 2v8h-7zM3 5h4M3 7h4M3 9h4M10 9h4M10 11h4M10 13h4" /></svg></IconButton>
            <IconButton $s={21} aria-label="貼り付け"><svg width="17" height="17" viewBox="0 0 17 17" fill="#777" stroke="#777"><path d="M2.500 3.500h3l1-2h4l1 2h3v11h-12z" /><path fill="#eee" d="M9.500 8.500h4l2 2v5h-6zM11 11h3M11 13h3" /></svg></IconButton>
            <IconButton $s={21} aria-label="削除"><svg width="17" height="17" viewBox="0 0 17 17" fill="none" stroke="#888"><path d="M3.500 5v10.500h10V5M2 4.500h13M6.500 4V2h4v2M6.500 7v6M8.500 7v6M10.500 7v6" /></svg></IconButton>
            <IconButton $s={21} aria-label="すべて削除"><svg width="17" height="17" viewBox="0 0 17 17" fill="none" stroke="#222"><path d="M3.500 5v10.500h5M2 4.500h13M6.500 4V2h4v2M5.500 7v6M7.500 7v6" /><path fill="#fff" d="M9.500 7.500h6v8h-6zM11 14v-3h3v3M11 12.500h3" /></svg></IconButton>
          </EditTools>
          <SideHead>株価</SideHead>
          <Radios>
            <label><input type="radio" name="price" defaultChecked />修正株価</label>
            <label><input type="radio" name="price" />原株価</label>
          </Radios>
          <SideHead>チャート種類</SideHead>
          <LegendTitle>ﾎﾞﾘﾝｼﾞｬｰ･ﾊﾞﾝﾄﾞ</LegendTitle>
          <Legend>
            {legend.map(([c, name, v]) => (
              <LegendItem key={name} $c={c}><div>{name}</div><p>{v}<span>円</span></p></LegendItem>
            ))}
          </Legend>
        </Side>
      </Main>

      <Footer>
        <FootTab>市況情報</FootTab>
        <FootTab $on>個別チャート</FootTab>
        <FootTab>個別チャート</FootTab>
        <FootIcons>
          {[0, 1, 2].map((k) => <FootButton key={k} aria-label={`配置${k + 1}`}><WinIcon kind={k} /></FootButton>)}
          <FootButton aria-label="先頭"><Chevrons dir="l" stroke="#00008c" shadow="#fff" w={16} /></FootButton>
          <FootButton aria-label="前"><Chevrons dir="l" one stroke="#00008c" shadow="#fff" w={16} /></FootButton>
          <FootButton aria-label="次"><Chevrons dir="r" one stroke="#00008c" shadow="#fff" w={16} /></FootButton>
          <FootButton aria-label="末尾"><Chevrons dir="r" stroke="#00008c" shadow="#fff" w={16} /></FootButton>
        </FootIcons>
      </Footer>
    </Page>
  );
}
